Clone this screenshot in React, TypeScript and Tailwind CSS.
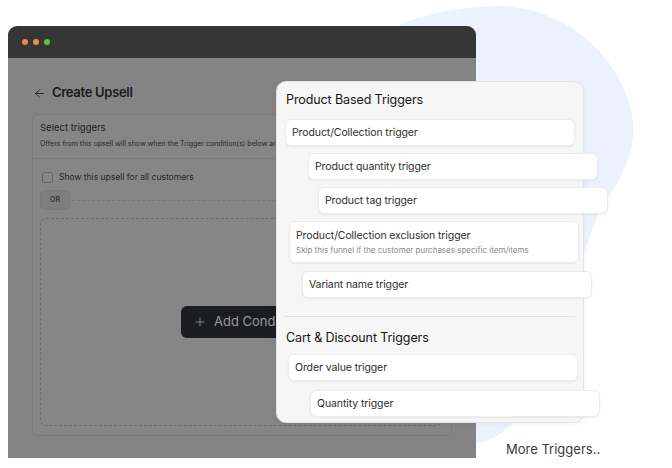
import { ArrowLeft, Plus } from "lucide-react";

const ITEM =
  "w-[290px] rounded-[6px] border border-[#ececec] bg-white shadow-[0_1px_2px_rgba(0,0,0,0.06)] px-[6px] text-[10.5px] tracking-[-0.1px] text-[#2e2e2e] flex items-center";

export default function App() {
  return (
    <div className="relative w-[672px] h-[468px] overflow-hidden bg-white pt-[26px] pl-2 font-['Inter','Liberation_Sans',sans-serif]">
      {/* soft blob behind */}
      <svg className="absolute inset-0" width="672" height="468" viewBox="0 0 672 468">
        <path
          d="M370 42 C400 20 440 8 496 6 C565 6 618 55 631 110 C639 145 625 175 600 210 C570 280 560 370 513 423 C500 436 488 442 470 444 L370 444 Z"
          fill="#ebf1fd"
        />
      </svg>

      {/* App window */}
      <div className="relative w-[468px] h-[432px] flex flex-col rounded-t-[9px] overflow-hidden">
        <div className="h-[32px] bg-[#363636] flex items-center gap-[5px] pl-[14px]">
          <span className="w-[6px] h-[6px] rounded-full bg-[#f0884a]" />
          <span className="w-[6px] h-[6px] rounded-full bg-[#f28c4b]" />
          <span className="w-[6px] h-[6px] rounded-full bg-[#5bc546]" />
        </div>
        <div className="flex-1 bg-[#848484] pt-[27px] pl-6">
          <div className="flex items-center gap-[6px] h-4 text-[#1b1b1b]">
            <ArrowLeft size={13} strokeWidth={1.6} className="ml-[1px]" />
            <span className="text-[13px] font-semibold tracking-[-0.3px]">Create Upsell</span>
          </div>

          <div className="mt-[13px] w-[420px] rounded-[6px] border border-[#7b7b7b] bg-[#868686]">
            <div className="px-[7px] pt-[6px] pb-[9px] border-b border-[#7b7b7b]">
              <div className="text-[9.5px] leading-[14px] text-[#202020]">Select triggers</div>
              <div className="mt-[4px] text-[7px] leading-[10px] text-[#262626] whitespace-nowrap">
                Offers from this upsell will show when the Trigger condition(s) below are met.
              </div>
            </div>
            <div className="mt-[13px] pl-[9px] flex items-center gap-[6px] h-[11px]">
              <span className="w-[11px] h-[11px] rounded-[2px] border border-[#666]" />
              <span className="text-[8.5px] leading-[11px] text-[#262626]">Show this upsell for all customers</span>
            </div>
            <div className="mt-[7px] ml-[7px] flex items-center gap-[2px]">
              <div className="w-[30px] h-[20px] rounded-[4px] border border-[#7a7a7a] bg-[#7e7e7e] flex items-center justify-center text-[7px] font-semibold text-[#333]">
                OR
              </div>
              <div className="flex-1 border-t border-dashed border-[#767676]" />
            </div>
            <div className="mt-[8px] ml-[7px] mr-[9px] mb-[9px] h-[208px] rounded-[6px] border border-dashed border-[#6c6c6c] flex items-center justify-center">
              <div className="w-[120px] h-[32px] rounded-[6px] bg-[#1c1d20] flex items-center gap-[7px] pl-[12px] text-[13px] text-[#999] whitespace-nowrap overflow-hidden">
                <Plus size={14} strokeWidth={1.4} className="shrink-0" />
                Add Condition
              </div>
            </div>
          </div>
        </div>
      </div>

      {/* Triggers panel */}
      <div className="absolute left-[276px] top-[81px] w-[308px] h-[342px] rounded-[10px] border border-[#e4e4e4] bg-[#f6f6f6] shadow-[0_2px_6px_rgba(0,0,0,0.05)] pt-[10px]">
        <div className="pl-[9px] text-[12.5px] leading-4 tracking-[-0.1px] text-[#141414]">Product Based Triggers</div>
        <div className={`${ITEM} mt-[11px] ml-[8px] h-[27px]`}>Product/Collection trigger</div>
        <div className={`${ITEM} mt-[7px] ml-[31px] h-[27px]`}>Product quantity trigger</div>
        <div className={`${ITEM} mt-[7px] ml-[41px] h-[27px]`}>Product tag trigger</div>
        <div className={`${ITEM} mt-[7px] ml-[12px] h-[42px] flex-col !items-start pt-[7px]`}>
          <div className="leading-[14px]">Product/Collection exclusion trigger</div>
          <div className="mt-[2px] text-[8px] leading-[10px] tracking-normal text-[#8a8a8a]">
            Skip this funnel if the customer purchases specific item/items
          </div>
        </div>
        <div className={`${ITEM} mt-[8px] ml-[25px] h-[27px]`}>Variant name trigger</div>
        <div className="mt-[18px] ml-[8px] w-[290px] border-t border-[#e2e2e2]" />
        <div className="mt-[13px] pl-[9px] text-[12.5px] leading-4 tracking-[-0.1px] text-[#141414]">Cart &amp; Discount Triggers</div>
        <div className={`${ITEM} mt-[8px] ml-[11px] h-[27px]`}>Order value trigger</div>
        <div className={`${ITEM} mt-[9px] ml-[33px] h-[27px]`}>Quantity trigger</div>
      </div>

      <div className="absolute left-[506px] top-[441px] text-[13px] leading-4 text-[#3a3a3a]">More Triggers..</div>
    </div>
  );
}
